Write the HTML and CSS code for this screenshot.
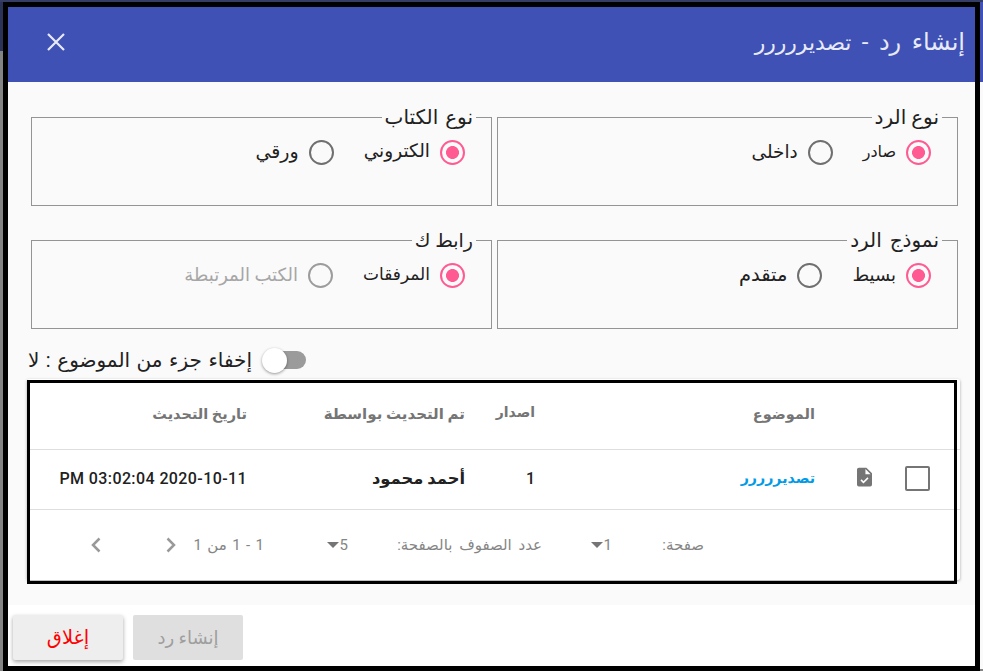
FILE: index.html
```html
<!DOCTYPE html>
<html lang="ar" dir="rtl">
<head>
<meta charset="utf-8">
<title>إنشاء رد</title>
<link rel="stylesheet" href="styles.css">
</head>
<body>
<main class="dialog">
  <header class="toolbar">
    <h1>إنشاء رد - <span class="t t-title">تصديررررر</span></h1>
    <svg class="close" viewBox="0 0 18 18"><path d="M1 1L17 17M17 1L1 17"/></svg>
  </header>
  <section class="content">
    <div class="groups">
      <fieldset><legend><span class="t">نوع الرد</span></legend>
        <div class="radios">
          <label class="radio on"><i></i><span class="t t-r1">صادر</span></label>
          <label class="radio"><i></i><span class="t t-r2">داخلى</span></label>
        </div>
      </fieldset>
      <fieldset><legend><span class="t t-l2">نوع الكتاب</span></legend>
        <div class="radios">
          <label class="radio on"><i></i><span class="t t-r3">الكتروني</span></label>
          <label class="radio"><i></i><span class="t t-r4">ورقي</span></label>
        </div>
      </fieldset>
      <fieldset><legend><span class="t t-l3">نموذج الرد</span></legend>
        <div class="radios">
          <label class="radio on"><i></i><span class="t">بسيط</span></label>
          <label class="radio"><i></i><span class="t t-r6">متقدم</span></label>
        </div>
      </fieldset>
      <fieldset><legend><span class="t t-l4">رابط ك</span></legend>
        <div class="radios">
          <label class="radio on"><i></i><span class="t t-r7">المرفقات</span></label>
          <label class="radio off"><i></i><span class="t">الكتب المرتبطة</span></label>
        </div>
      </fieldset>
    </div>
    <div class="switch-row">
      <span class="switch"><i></i></span>
      <span class="t t-switch">إخفاء جزء من الموضوع : لا</span>
    </div>
    <div class="card">
      <div class="row head">
        <span></span><span></span>
        <span class="cell"><span class="t t-h1">الموضوع</span></span>
        <span class="cell raised"><span class="t t-h2">اصدار</span></span>
        <span class="cell"><span class="t">تم التحديث بواسطة</span></span>
        <span class="cell"><span class="t t-h4">تاريخ التحديث</span></span>
      </div>
      <div class="row data">
        <span class="check-cell"><i class="checkbox"></i></span>
        <span class="icon-cell"><svg class="doc" viewBox="0 0 16 20"><path fill-rule="evenodd" d="M2 0H10L16 6V18a2 2 0 0 1-2 2H2a2 2 0 0 1-2-2V2a2 2 0 0 1 2-2zM9 1.5V7H14.5zM4.9 12.5L3.7 13.7L6.9 16.9L12.3 11.5L11.1 10.3L6.9 14.5z"/></svg></span>
        <span class="cell"><a class="t t-d1">تصديررررر</a></span>
        <span class="cell">1</span>
        <span class="cell"><span class="t t-d2">أحمد محمود</span></span>
        <span class="cell"><span class="t t-d3">2020-10-11 03:02:04 PM</span></span>
      </div>
      <div class="pager">
        <span class="p-page"><span class="t">صفحة:</span></span>
        <span class="p-select">1<i class="caret"></i></span>
        <span class="p-rows"><span class="t t-p2">عدد الصفوف بالصفحة:</span></span>
        <span class="p-select p-five">5<i class="caret"></i></span>
        <span class="p-range"><span class="t t-p3">1 - 1 من 1</span></span>
        <svg class="chev" viewBox="0 0 10 16"><path d="M1.5 1.5L8 8L1.5 14.5"/></svg>
        <svg class="chev prev" viewBox="0 0 10 16"><path d="M8.5 1.5L2 8L8.5 14.5"/></svg>
      </div>
      <div class="frame"></div>
    </div>
  </section>
  <footer class="actions">
    <button class="btn disabled"><span class="t t-b1">إنشاء رد</span></button>
    <button class="btn danger"><span class="t t-b2">إغلاق</span></button>
  </footer>
</main>
</body>
</html>
```
FILE: styles.css
```css
* { box-sizing: border-box; }
body {
  margin: 0;
  width: 983px;
  height: 671px;
  overflow: hidden;
  padding: 2px 3px 0;
  font-family: Roboto, "DejaVu Sans", sans-serif;
  color: #212121;
  background:
    linear-gradient(#353d66, #353d66) 0 0 / 983px 2px no-repeat,
    linear-gradient(#2b3358, #2b3358) 0 0 / 3px 51px no-repeat,
    linear-gradient(#3f51b5, #3f51b5) 100% 0 / 3px 82px no-repeat,
    linear-gradient(#848484, #848484) 0 0 / 3px 671px no-repeat,
    linear-gradient(#848484, #848484) 100% 100% / 3px 2px no-repeat,
    #fafafa;
}
.dialog {
  height: 669px;
  border: 5px solid #000;
  display: flex;
  flex-direction: column;
  background: #fafafa;
}
.t { display: inline-block; white-space: nowrap; }
.toolbar {
  height: 75px;
  flex: none;
  background: #3f51b5;
  color: #e8eaf6;
  display: flex;
  justify-content: space-between;
  align-items: center;
  padding: 0 10px 5px 39px;
}
h1 { margin: 0; font-size: 24px; font-weight: 400; word-spacing: 4.5px; }
.t-title { font-size: 21.8px; }
.close { width: 18px; height: 18px; fill: none; stroke: #e8eaf6; stroke-width: 2.2; }
.content { height: 523px; flex: none; padding: 25px 17px 0 15px; }
.groups {
  display: grid;
  grid-template-columns: 461px 461px;
  gap: 24px 5px;
}
fieldset {
  height: 99px;
  margin: 0;
  padding: 0 26px;
  border: 1px solid #949494;
}
legend { height: 20px; line-height: 20px; font-size: 20px; padding: 0 3px; margin-right: -11px; }
.t-l2 { word-spacing: 2px; }
.t-l3 { word-spacing: 3px; }
.t-l4 { font-size: 19px; }
.radios { display: flex; gap: 30px; padding-top: 13px; }
.radio { display: flex; align-items: center; gap: 10px; height: 25px; font-size: 18px; line-height: 23px; }
.radio .t { padding-bottom: 3px; }
.radio .t-r1 { font-size: 16px; }
.radio .t-r2 { font-size: 18.4px; }
.radio .t-r3 { font-size: 18.5px; }
.radio .t-r4 { font-size: 19px; }
.radio .t-r6 { font-size: 19.5px; }
.radio .t-r7 { font-size: 17px; }
.radio i {
  width: 25px; height: 25px; flex: none;
  border: 2px solid #6f6f6f;
  border-radius: 50%;
}
.radio.on i { border-color: #ff5a92; background: radial-gradient(circle, #ff5a92 6.1px, transparent 6.8px); }
.radio.off { color: #a6a6a6; }
.radio.off i { border-color: #9c9c9c; }
.switch-row { display: flex; align-items: center; gap: 10px; height: 30px; margin: 16px 652px 0 0; font-size: 20px; }
.t-switch { word-spacing: 1.6px; }
.switch { width: 44px; height: 26px; display: flex; align-items: center; flex: none; position: relative; }
.switch::before { content: ""; width: 38px; height: 18px; border-radius: 9px; background: #9b9b9b; }
.switch i {
  position: absolute; left: 0; top: 1px;
  width: 25px; height: 25px; border-radius: 50%;
  background: #fff;
  box-shadow: 0 1px 3px rgba(0,0,0,.4);
}
.card {
  position: relative;
  width: 933px;
  height: 201px;
  margin: 4px -2px 0 0;
  background: #fff;
  border-radius: 2px;
  box-shadow: 0 1px 3px rgba(0,0,0,.35);
}
.frame { position: absolute; left: 0; top: 1px; width: 930px; height: 204px; border: 3px solid #000; }
.row {
  display: grid;
  grid-template-columns: 70px 75px 280px 70px 218px 1fr;
  align-items: center;
  border-bottom: 1px solid #dedede;
}
.head { height: 71px; color: #757575; font-size: 15px; font-weight: 700; }
.t-h1, .t-h4 { font-size: 14.5px; }
.t-h2 { font-size: 14px; }
.raised { padding-bottom: 4px; }
.data { height: 60px; font-size: 16px; font-weight: 500; padding-bottom: 3px; }
.t-d1 { color: #039be5; font-weight: 700; font-size: 14.2px; padding-bottom: 2px; }
.t-d2 { font-weight: 700; font-size: 16.3px; }
.t-d3 { letter-spacing: .4px; }
.check-cell { padding-right: 30px; }
.checkbox { display: block; width: 25px; height: 25px; border: 2px solid #757575; border-radius: 2px; }
.icon-cell { padding: 0 18px 2px 0; }
.doc { display: block; width: 15px; height: 20px; fill: #757575; }
.pager { height: 70px; display: flex; align-items: center; color: #858585; font-size: 15px; font-weight: 400; padding-right: 256px; }
.p-page { width: 92px; }
.p-select { width: 70px; display: flex; align-items: center; }
.p-five { width: 84px; }
.p-rows { width: 194px; }
.t-p2 { word-spacing: 3px; }
.t-p3 { word-spacing: 1.7px; }
.caret { margin-right: 1px; border: 6px solid transparent; border-top-color: #757575; border-bottom: 0; }
.p-range { width: 88px; }
.chev { width: 10px; height: 16px; fill: none; stroke: #999; stroke-width: 2.5; }
.prev { margin-right: 65px; }
.actions {
  flex: 1;
  background: #fff;
  display: flex;
  justify-content: flex-end;
  gap: 10px;
  padding: 10px 0 6px 5px;
}
.btn { width: 110px; height: 45px; border: 0; border-radius: 2px; font: 18px Roboto, "DejaVu Sans", sans-serif; padding: 0; }
.t-b2 { font-size: 19.5px; }
.disabled { background: #dfdfdf; color: #9e9e9e; }
.danger { background: #eee; color: #f00; box-shadow: 0 2px 4px rgba(0,0,0,.35); }
```
